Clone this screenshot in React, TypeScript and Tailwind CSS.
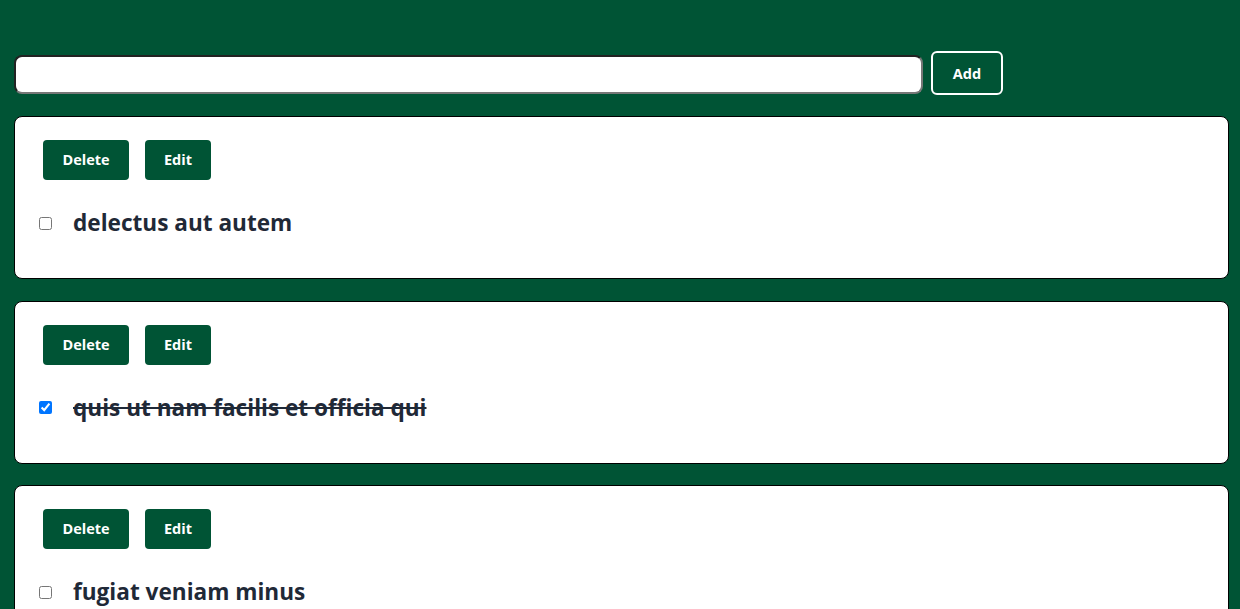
import { useState } from 'react';

type Todo = { id: number; title: string; completed: boolean };

const initialTodos: Todo[] = [
  { id: 1, title: 'delectus aut autem', completed: false },
  { id: 2, title: 'quis ut nam facilis et officia qui', completed: true },
  { id: 3, title: 'fugiat veniam minus', completed: false },
];

function TodoCard({ todo, onToggle }: { todo: Todo; onToggle: () => void }) {
  return (
    <div className="rounded-lg border border-black bg-white pt-[23px] pb-[39px] pl-[28px]">
      <div className="flex gap-4">
        <button className="h-10 w-[86px] rounded bg-[#005435] text-[14.5px] font-bold text-white">Delete</button>
        <button className="h-10 w-[66px] rounded bg-[#005435] text-[14.5px] font-bold text-white">Edit</button>
      </div>
      <div className="mt-[27px] flex items-center">
        <input
          type="checkbox"
          checked={todo.completed}
          onChange={onToggle}
          className="ml-[-4px] h-[13px] w-[13px]"
        />
        <span
          className={
            'ml-[21px] text-[22.6px] leading-[32px] font-bold text-[#1f2937] ' +
            (todo.completed ? 'line-through' : '')
          }
        >
          {todo.title}
        </span>
      </div>
    </div>
  );
}

export default function App() {
  const [todos, setTodos] = useState(initialTodos);
  const [text, setText] = useState('');

  return (
    <div className="min-h-screen bg-[#005435] pt-[50px] pl-[14px] pr-[11px] font-['Open_Sans',sans-serif]">
      <div className="flex items-start gap-2">
        <input
          value={text}
          onChange={(e) => setText(e.target.value)}
          className="mt-[5px] h-[39px] w-[909px] rounded-lg border-2 border-t-[#222] border-l-[#222] border-b-[#777] border-r-[#777] bg-white px-2"
        />
        <button className="mt-px h-[44px] w-[72px] rounded-md border-2 border-white pt-[2px] text-[14.5px] font-bold text-white">
          Add
        </button>
      </div>
      <div className="mt-[21px] flex flex-col gap-[21.5px]">
        {todos.map((t) => (
          <TodoCard
            key={t.id}
            todo={t}
            onToggle={() => setTodos(todos.map((x) => (x.id === t.id ? { ...x, completed: !x.completed } : x)))}
          />
        ))}
      </div>
    </div>
  );
}
